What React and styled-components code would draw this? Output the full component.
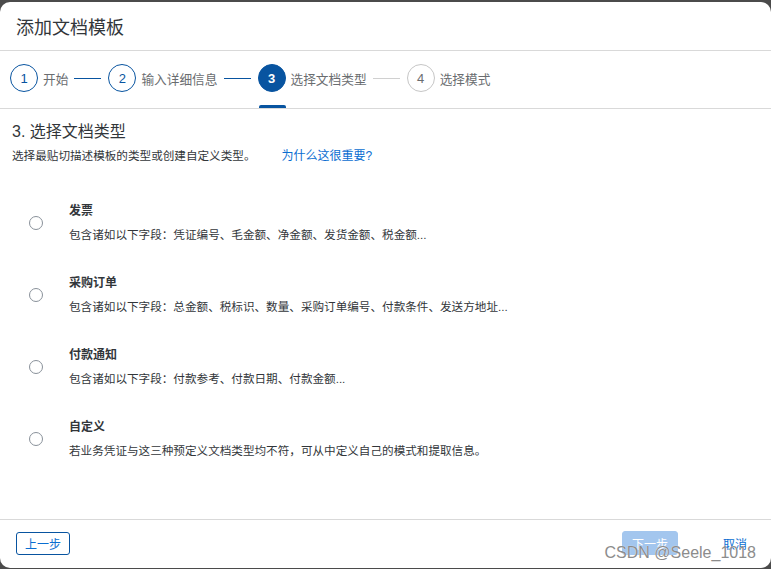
import React from "react";
import styled, { createGlobalStyle } from "styled-components";

const Global = createGlobalStyle`
  html, body { margin: 0; padding: 0; background: #4b4b4b; }
  body { font-family: "Liberation Sans", "Noto Sans CJK SC", sans-serif; }
  * { box-sizing: border-box; }
`;

const Dialog = styled.div`
  position: relative;
  margin-top: 2px;
  width: 771px;
  height: 566px;
  background: #fff;
  border-radius: 10px;
  display: flex;
  flex-direction: column;
  overflow: hidden;
  color: #32363a;
`;

const Header = styled.div`
  height: 49px;
  flex-shrink: 0;
  display: flex;
  align-items: center;
  padding: 0 0 1px 16px;
  font-size: 18px;
  color: #32363a;
  border-bottom: 1px solid #d9d9d9;
`;

const Stepper = styled.div`
  height: 58px;
  flex-shrink: 0;
  display: flex;
  align-items: flex-start;
  padding: 13px 0 0 10px;
  border-bottom: 1px solid #d9d9d9;
`;

const Step = styled.div`
  position: relative;
  display: flex;
  align-items: center;
  height: 44px;
  align-self: stretch;
  padding-bottom: 16px;
`;

const Circle = styled.div`
  width: 28px;
  height: 28px;
  border-radius: 50%;
  display: flex;
  align-items: center;
  justify-content: center;
  font-size: 13px;
  font-family: "Liberation Sans", sans-serif;
  border: 1px solid ${(p) => (p.$state === "todo" ? "#c6c6c6" : "#0854a0")};
  background: ${(p) => (p.$state === "active" ? "#0854a0" : "#fff")};
  color: ${(p) =>
    p.$state === "active" ? "#fff" : p.$state === "done" ? "#0854a0" : "#6a6d70"};
  font-weight: ${(p) => (p.$state === "active" ? 700 : 400)};
`;

const StepLabel = styled.span`
  margin-left: 5px;
  font-size: 12.7px;
  color: #6a6d70;
  white-space: nowrap;
`;

const Connector = styled.span`
  width: 27px;
  height: 1px;
  margin: 0 7px 0 6px;
  background: ${(p) => (p.$done ? "#0854a0" : "#d0d0d0")};
`;

const ActiveBar = styled.span`
  position: absolute;
  left: 1px;
  bottom: 0;
  width: 27px;
  height: 3px;
  border-radius: 2px 2px 0 0;
  background: #0854a0;
`;

const Content = styled.div`
  flex: 1;
  padding: 13px 12px 0 12px;
  display: flex;
  flex-direction: column;
`;

const Heading = styled.div`
  font-size: 16px;
  line-height: 20px;
  color: #32363a;
`;

const SubText = styled.div`
  margin-top: 6px;
  font-size: 11.6px;
  line-height: 16px;
  color: #32363a;
`;

const Link = styled.a`
  margin-left: 26px;
  color: #0a6ed1;
  text-decoration: none;
  font-size: 12px;
`;

const OptionList = styled.div`
  margin-top: 23px;
  display: flex;
  flex-direction: column;
`;

const Option = styled.label`
  height: 72px;
  display: flex;
  align-items: center;
`;

const Radio = styled.span`
  width: 14px;
  height: 14px;
  margin-left: 17px;
  border-radius: 50%;
  border: 1px solid #89919a;
  background: #fff;
  flex-shrink: 0;
`;

const OptionText = styled.div`
  margin-left: 26px;
  display: flex;
  flex-direction: column;
  gap: 8px;
`;

const OptionTitle = styled.div`
  font-size: 12px;
  line-height: 16px;
  font-weight: 700;
  color: #32363a;
`;

const OptionDesc = styled.div`
  font-size: 11.6px;
  line-height: 16px;
  color: #32363a;
`;

const Footer = styled.div`
  height: 49px;
  flex-shrink: 0;
  border-top: 1px solid #d9d9d9;
  display: flex;
  align-items: center;
  padding: 0 15px 2px 16px;
`;

const Button = styled.button`
  font-family: "Liberation Sans", "Noto Sans CJK SC", sans-serif;
  font-size: 12px;
  height: ${(p) => (p.$variant === "primary" ? "24px" : "23px")};
  padding: 0 ${(p) => (p.$variant === "primary" ? "9px" : "8px")};
  border-radius: 3px;
  cursor: pointer;
  border: 1px solid
    ${(p) =>
      p.$variant === "outline" ? "#0854a0" : p.$variant === "primary" ? "#a3c6ee" : "transparent"};
  background: ${(p) => (p.$variant === "primary" ? "#a3c6ee" : "transparent")};
  color: ${(p) => (p.$variant === "primary" ? "#fff" : "#0a6ed1")};
`;

const Spacer = styled.div`
  flex: 1;
`;

const CancelButton = styled(Button)`
  margin-left: 36px;
`;

const Watermark = styled.div`
  position: absolute;
  right: 15px;
  bottom: 6px;
  font-family: "Liberation Sans", sans-serif;
  font-size: 16px;
  color: #8c8c8c;
  text-shadow: 0 0 1px #fff;
  pointer-events: none;
`;

const steps = [
  { n: 1, label: "开始", state: "done" },
  { n: 2, label: "输入详细信息", state: "done" },
  { n: 3, label: "选择文档类型", state: "active" },
  { n: 4, label: "选择模式", state: "todo" },
];

const options = [
  { title: "发票", desc: "包含诸如以下字段：凭证编号、毛金额、净金额、发货金额、税金额..." },
  { title: "采购订单", desc: "包含诸如以下字段：总金额、税标识、数量、采购订单编号、付款条件、发送方地址..." },
  { title: "付款通知", desc: "包含诸如以下字段：付款参考、付款日期、付款金额..." },
  { title: "自定义", desc: "若业务凭证与这三种预定义文档类型均不符，可从中定义自己的模式和提取信息。" },
];

export default function App() {
  return (
    <>
      <Global />
      <Dialog>
        <Header>添加文档模板</Header>
        <Stepper>
          {steps.map((s, i) => (
            <React.Fragment key={s.n}>
              <Step>
                <Circle $state={s.state}>{s.n}</Circle>
                <StepLabel>{s.label}</StepLabel>
                {s.state === "active" && <ActiveBar />}
              </Step>
              {i < steps.length - 1 && (
                <Step>
                  <Connector $done={steps[i + 1].state !== "todo"} />
                </Step>
              )}
            </React.Fragment>
          ))}
        </Stepper>
        <Content>
          <Heading>3. 选择文档类型</Heading>
          <SubText>
            选择最贴切描述模板的类型或创建自定义类型。
            <Link href="#">为什么这很重要?</Link>
          </SubText>
          <OptionList>
            {options.map((o) => (
              <Option key={o.title}>
                <Radio />
                <OptionText>
                  <OptionTitle>{o.title}</OptionTitle>
                  <OptionDesc>{o.desc}</OptionDesc>
                </OptionText>
              </Option>
            ))}
          </OptionList>
        </Content>
        <Footer>
          <Button $variant="outline">上一步</Button>
          <Spacer />
          <Button $variant="primary">下一步</Button>
          <CancelButton $variant="text">取消</CancelButton>
        </Footer>
        <Watermark>CSDN @Seele_1018</Watermark>
      </Dialog>
    </>
  );
}
